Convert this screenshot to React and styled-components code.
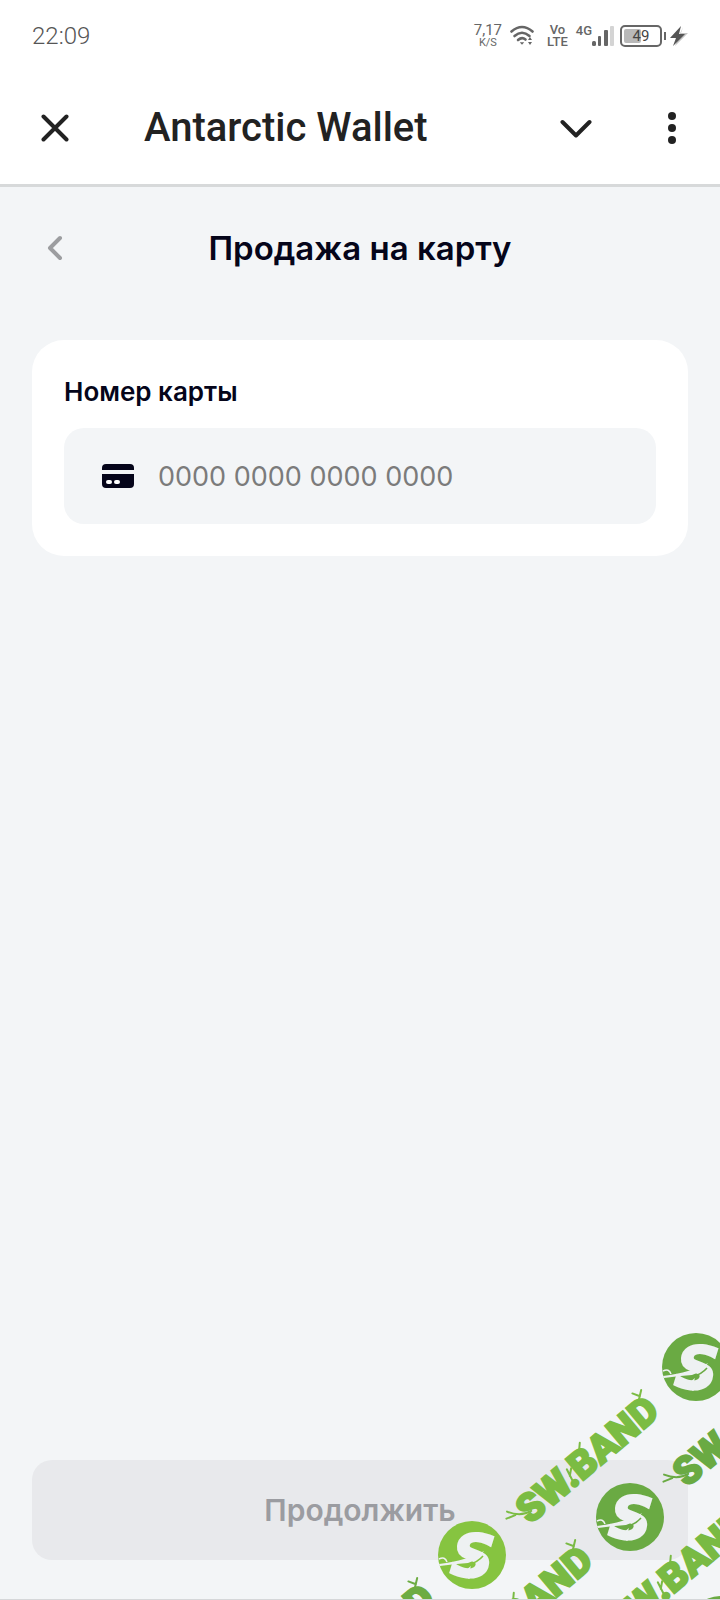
import React from 'react';

import styled, { createGlobalStyle } from 'styled-components';


const App = () => {
    return(
      <Page>
          <GlobalStyle />
          <StatusBar />
          <Header>
              <IconButton aria-label="Close">
                <svg width="28" height="28" viewBox="0 0 28 28" fill="none" stroke="#222222" strokeWidth="4" strokeLinecap="round">
                  <path d="M2.5 2.5 L25.5 25.5 M25.5 2.5 L2.5 25.5" />
                </svg>
              </IconButton>
              <AppName>Antarctic Wallet</AppName>
              <IconButton aria-label="Collapse">
                <svg width="32" height="20" viewBox="0 0 32 20" fill="none" stroke="#222222" strokeWidth="4" strokeLinecap="round" strokeLinejoin="round">
                  <path d="M2.5 4 L16 17.5 L29.5 4" />
                </svg>
              </IconButton>
              <IconButton aria-label="Menu">
                <svg width="8" height="32" viewBox="0 0 8 32" fill="#222222">
                  <circle cx="4" cy="4" r="4" />
                  <circle cx="4" cy="16" r="4" />
                  <circle cx="4" cy="28" r="4" />
                </svg>
              </IconButton>
          </Header>

          <Content>
              <TitleRow>
                <BackButton aria-label="Назад">
                  <svg width="16" height="26" viewBox="0 0 16 26" fill="none" stroke="#9c9da0" strokeWidth="4" strokeLinecap="round" strokeLinejoin="round">
                    <path d="M13 3 L3 13 L13 23" />
                  </svg>
                </BackButton>
                <Title>Продажа на карту</Title>
              </TitleRow>

              <Card>
                <Label htmlFor="card-number">Номер карты</Label>
                <Field>
                  <svg width="32" height="24" viewBox="0 0 32 24">
                    <path fill="#05051a" d="M4 0 H28 Q32 0 32 4 V6 H0 V4 Q0 0 4 0 Z" />
                    <path fill="#05051a" d="M0 10 H32 V20 Q32 24 28 24 H4 Q0 24 0 20 Z" />
                    <rect x="4" y="16" width="6" height="4" rx="2" fill="#ffffff" />
                    <rect x="12" y="16" width="6" height="4" rx="2" fill="#ffffff" />
                  </svg>
                  <CardInput id="card-number" type="text" inputMode="numeric" placeholder="0000 0000 0000 0000" />
                </Field>
              </Card>

              <SubmitButton disabled>Продолжить</SubmitButton>
          </Content>
          <Watermark />
      </Page>
    );
}

const StatusBar = () => (
    <Status>
        <Clock>22:09</Clock>
        <Indicators>
          <Network>
            <Stack>
              <Speed>7,17</Speed>
              <Unit>K/S</Unit>
            </Stack>
            <svg width="24" height="22" viewBox="0 0 24 22" fill="none" stroke="#666666" strokeWidth="2.6" strokeLinecap="round">
              <path d="M1.5 6.5 Q12 -2.5 22.5 6.5" />
              <path d="M4.5 11 Q12 4.5 19.5 11" />
              <path d="M8 15 Q12 11.5 15.5 14.5" />
              <path d="M9.8 17.2 H14.2 L12 19.8 Z" fill="#666666" stroke="none" />
              <path d="M18 15 L20 12 L22 15 Z M18 17 L20 20 L22 17 Z" fill="#666666" stroke="none" />
            </svg>
          </Network>
          <Mobile>
            <Stack>
              <Volte>Vo</Volte>
              <Volte>LTE</Volte>
            </Stack>
            <Signal>
              <Volte>4G</Volte>
              <svg width="22" height="22" viewBox="0 0 22 22">
                <rect x="0" y="16" width="4" height="5" rx="1.5" fill="#666666" />
                <rect x="6" y="11" width="3" height="10" rx="1" fill="#666666" />
                <rect x="12" y="5" width="4" height="16" rx="1" fill="#666666" />
                <rect x="18" y="1" width="4" height="20" rx="1" fill="#d4d4d4" />
              </svg>
            </Signal>
          </Mobile>
          <Power>
            <Battery>
              <Charge style={{ width: '49%' }} />
              <Level>49</Level>
            </Battery>
            <BatteryTip />
            <svg width="20" height="22" viewBox="0 0 20 22">
              <path fill="#c4c4c4" d="M15 2 L13 8 L20 8 L7 21 L10 13 Z" />
              <path fill="#555555" d="M13 1 L2 13 L8 13 L5 21 L17 9 L11 9 Z" />
            </svg>
          </Power>
        </Indicators>
    </Status>
);

// one cell of the repeated pattern is a round badge or a slanted wordmark
const badges = [
    { x: 72, y: 235, color: '#86c440' },
    { x: 296, y: 47, color: '#6aaa43' },
    { x: 230, y: 197, color: '#6aaa43' },
    { x: 321, y: 310, color: '#6aaa43' },
];

const wordmarks = [
    { x: 130, y: 205, color: '#7bbc43' },
    { x: 64, y: 355, color: '#79ba43' },
    { x: -94, y: 393, color: '#6dac43' },
    { x: 287, y: 168, color: '#6aaa43' },
    { x: 221, y: 318, color: '#79ba43' },
];

const Watermark = () => (
    <Overlay width="320" height="280" viewBox="0 0 320 280" aria-hidden="true">
        {badges.map(({ x, y, color }) => (
          <g key={`${x}-${y}`} transform={`translate(${x} ${y})`}>
            <circle r="34" fill={color} />
            <BadgeLetter x="1" y="22" textAnchor="middle" transform="rotate(6)">S</BadgeLetter>
            <path d="M-33 9 Q-18 7 -8 4 Q2 2 12 -4 Q6 5 -4 8 Q-18 9 -32 11 Z" fill="#eef1f2" />
            <path d="M-4 10 Q6 7 11 1" fill="none" stroke={color} strokeWidth="1.5" />
            <path d="M-33 4 Q-27 1 -25 7" fill="none" stroke="#eef1f2" strokeWidth="1.5" />
            <path d="M-11 19 L-1 11 L-3 17 L4 18 L-3 24 Z" fill="#eef1f2" />
          </g>
        ))}
        {wordmarks.map(({ x, y, color }) => (
          <g key={`${x}-${y}`} transform={`translate(${x} ${y}) rotate(-40)`} fill={color} stroke={color}>
            <Wordmark>SW.BAND</Wordmark>
            <g fill="none" strokeWidth="2" strokeLinecap="round">
              <path d="M10 -10 Q-2 -12 -9 -25 M-5 -17 L-14 -20" />
              <path d="M61 -6 L64 -19 M62 -12 L68 -17" />
              <path d="M86 -26 L91 -31" />
              <path d="M160 -23 L172 -32 M167 -28 L163 -35" />
            </g>
          </g>
        ))}
    </Overlay>
);

export default App;

const GlobalStyle = createGlobalStyle`
    * {
        box-sizing: border-box;
    }

    body {
        margin: 0;
        background-color: #f3f5f7;
    }

    button, input {
        font-family: inherit;
        border: none;
        padding: 0;
        background: none;
    }

    svg {
        display: block;
        flex-shrink: 0;
    }
`;

const Page = styled.div`
    position: relative;
    display: flex;
    flex-direction: column;
    min-height: 100vh;
    overflow: hidden;
    font-family: Inter, "Noto Sans", sans-serif;
    color: #05051a;
    border-bottom: 1px solid #d5d7d9;
`;

const Status = styled.div`
    display: flex;
    justify-content: space-between;
    align-items: center;
    height: 72px;
    padding: 0 32px;
    background-color: white;
    font-family: Roboto, sans-serif;
    color: #666666;
`;

const Clock = styled.span`
    font-size: 24px;
    line-height: 28px;
    font-weight: 300;
    color: #555555;
`;

const Indicators = styled.div`
    display: flex;
    align-items: center;
`;

const Network = styled.div`
    display: flex;
    align-items: center;
    gap: 8px;
    margin-right: 13px;
`;

const Mobile = styled.div`
    display: flex;
    align-items: center;
    gap: 8px;
    margin-right: 6px;
`;

const Stack = styled.div`
    display: flex;
    flex-direction: column;
    align-items: center;
`;

const Speed = styled.span`
    font-size: 15px;
    line-height: 13px;
`;

const Unit = styled.span`
    font-size: 11px;
    line-height: 11px;
`;

const Volte = styled.span`
    font-size: 13px;
    line-height: 12px;
    font-weight: 500;
`;

const Signal = styled.div`
    display: flex;
    align-items: flex-start;
`;

const Power = styled.div`
    display: flex;
    align-items: center;
    gap: 2px;
`;

const Battery = styled.div`
    position: relative;
    width: 42px;
    height: 22px;
    padding: 2px;
    border: 2px solid #666666;
    border-radius: 5px;
`;

const Charge = styled.div`
    height: 100%;
    border-radius: 2px;
    background-color: #b9b9b9;
`;

const Level = styled.span`
    position: absolute;
    inset: 0;
    font-size: 15px;
    line-height: 18px;
    text-align: center;
    color: #444444;
`;

const BatteryTip = styled.div`
    width: 2px;
    height: 8px;
    background-color: #666666;
`;

const Header = styled.header`
    display: flex;
    align-items: center;
    height: 115px;
    padding: 0 25px 0 32px;
    background-color: white;
    border-bottom: 3px solid #d7d9da;
`;

const IconButton = styled.button`
    display: flex;
    justify-content: center;
    align-items: center;
    width: 46px;
    height: 48px;

    & + & {
        margin-left: 50px;
    }
`;

const AppName = styled.h1`
    flex: 1;
    margin: 0 0 0 66px;
    font-family: Roboto, sans-serif;
    font-size: 40px;
    line-height: 48px;
    font-weight: 500;
    color: #222222;
`;

const Content = styled.main`
    flex: 1;
    display: flex;
    flex-direction: column;
    padding: 37px 32px 39px;
`;

const TitleRow = styled.div`
    display: grid;
    grid-template-columns: 46px 1fr 46px;
    align-items: center;
    margin-bottom: 68px;
`;

const BackButton = styled.button`
    display: flex;
    justify-content: center;
    align-items: center;
    height: 48px;
`;

const Title = styled.h2`
    margin: 0;
    font-size: 33px;
    line-height: 48px;
    font-weight: 600;
    text-align: center;
`;

const Card = styled.section`
    display: flex;
    flex-direction: column;
    gap: 16px;
    padding: 32px;
    background-color: white;
    border-radius: 32px;
`;

const Label = styled.label`
    font-size: 26px;
    line-height: 40px;
    font-weight: 600;
`;

const Field = styled.div`
    display: flex;
    align-items: center;
    gap: 24px;
    height: 96px;
    padding: 0 38px;
    background-color: #f3f5f7;
    border-radius: 20px;
`;

const CardInput = styled.input`
    flex: 1;
    min-width: 0;
    height: 48px;
    font-size: 27px;
    color: #05051a;

    &::placeholder {
        color: #7b7b7b;
    }
`;

const SubmitButton = styled.button`
    height: 100px;
    margin-top: auto;
    border-radius: 20px;
    background-color: #e8e9ec;
    font-size: 30px;
    font-weight: 600;
    color: #9b9ca1;
`;

const Overlay = styled.svg`
    position: absolute;
    right: 0;
    bottom: -1px;
    pointer-events: none;
`;

const BadgeLetter = styled.text`
    font-family: "DejaVu Sans", sans-serif;
    font-size: 60px;
    font-style: italic;
    font-weight: 700;
    fill: #eef1f2;
    stroke: #eef1f2;
    stroke-width: 2px;
`;

const Wordmark = styled.text`
    font-family: Roboto, sans-serif;
    font-size: 39px;
    font-weight: 900;
    stroke-width: 2px;
`;
